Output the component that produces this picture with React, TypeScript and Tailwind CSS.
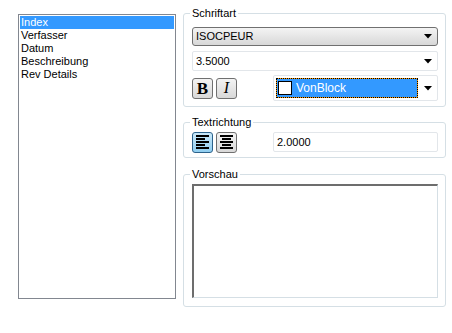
// App.tsx — text style dialog (Schriftart / Textrichtung / Vorschau)

const items = ["Index", "Verfasser", "Datum", "Beschreibung", "Rev Details"];

function Arrow() {
  return (
    <svg width="8" height="5" viewBox="0 0 8 5" className="block">
      <polygon points="0,0 8,0 4,4.5" fill="#000" />
    </svg>
  );
}

function AlignIcon({ centered }: { centered?: boolean }) {
  // 5 bars, alternating long/short
  const widths = [13, 9, 13, 9, 13];
  return (
    <svg width="13" height="14" viewBox="0 0 13 14" className="block">
      {widths.map((w, i) => (
        <rect
          key={i}
          x={centered ? (13 - w) / 2 : 0}
          y={i * 3}
          width={w}
          height="2"
          fill="#000"
        />
      ))}
    </svg>
  );
}

function Group({
  label,
  className,
  children,
}: {
  label: string;
  className?: string;
  children: React.ReactNode;
}) {
  return (
    <fieldset
      className={`border border-[#d5dfe5] rounded-[3px] pl-[8px] pr-[7px] ${className ?? ""}`}
    >
      <legend className="-ml-[2px] px-[2px] leading-[13px]">{label}</legend>
      {children}
    </fieldset>
  );
}

export default function App() {
  return (
    <div className="w-[452px] h-[333px] bg-white flex font-['Liberation_Sans',sans-serif] text-[11px] leading-[13px] text-black">
      {/* Property list */}
      <div className="ml-[18px] mt-[14px] w-[158px] h-[285px] border border-[#828790] p-[1px]">
        {items.map((item, i) => (
          <div
            key={item}
            className={
              i === 0
                ? "h-[13px] px-[1px] bg-[#3399ff] text-white"
                : "h-[13px] px-[1px]"
            }
          >
            {item}
          </div>
        ))}
      </div>

      {/* Right column */}
      <div className="ml-[7px] w-[263px] flex flex-col">
        {/* Schriftart */}
        <Group label="Schriftart" className="mt-[7px] pt-[7px] pb-[5px]">
          <div className="h-[19px] border border-[#707070] rounded-[3px] bg-gradient-to-b from-[#f4f4f4] to-[#d8d8d8] flex items-center pl-[3px] pr-[5px]">
            <span className="flex-1">ISOCPEUR</span>
            <Arrow />
          </div>
          <div className="mt-[5px] h-[20px] border border-[#e2e6ea] rounded-[2px] flex items-center pl-[3px] pr-[5px]">
            <span className="flex-1">3.5000</span>
            <Arrow />
          </div>
          <div className="mt-[4px] h-[26px] flex items-center">
            <div className="w-[21px] h-[21px] border border-[#707070] rounded-[3px] bg-gradient-to-b from-[#f4f4f4] to-[#d8d8d8] flex items-center justify-center font-['Liberation_Serif',serif] font-bold text-[17px] leading-none">
              B
            </div>
            <div className="ml-[3px] w-[21px] h-[21px] border border-[#707070] rounded-[3px] bg-gradient-to-b from-[#f4f4f4] to-[#d8d8d8] flex items-center justify-center font-['Liberation_Serif',serif] italic text-[16px] leading-none">
              I
            </div>
            <div className="ml-auto w-[165px] h-[26px] border border-[#e2e6ea] rounded-[2px] p-[2px] flex items-center">
              <div className="w-[142px] h-[20px] bg-[#ff9900]">
                <div className="h-full border border-dotted border-black bg-[#3399ff] bg-clip-padding flex items-center pl-[1px] text-white text-[12px]">
                  <span className="w-[14px] h-[14px] border border-black bg-white" />
                  <span className="ml-[4px]">VonBlock</span>
                </div>
              </div>
              <div className="flex-1 flex justify-center pl-[2px]">
                <Arrow />
              </div>
            </div>
          </div>
        </Group>

        {/* Textrichtung */}
        <Group label="Textrichtung" className="mt-[9px] pt-[3px] pb-[5px]">
          <div className="h-[20px] flex items-center">
            <div className="w-[21px] h-[21px] border border-[#2c628b] rounded-[3px] bg-gradient-to-b from-[#c9e8f9] to-[#8fcdf0] flex items-center justify-center">
              <AlignIcon />
            </div>
            <div className="ml-[3px] w-[21px] h-[21px] border border-[#707070] rounded-[3px] bg-gradient-to-b from-[#f4f4f4] to-[#d8d8d8] flex items-center justify-center">
              <AlignIcon centered />
            </div>
            <div className="ml-auto w-[165px] h-[20px] border border-[#e2e6ea] rounded-[2px] flex items-center pl-[3px]">
              2.0000
            </div>
          </div>
        </Group>

        {/* Vorschau */}
        <Group label="Vorschau" className="mt-[10px] pt-[3px] pb-[8px]">
          <div className="h-[114px] border-t-2 border-l-2 border-r border-b border-t-[#6d6d6d] border-l-[#6d6d6d] border-r-[#d5dfe5] border-b-[#d5dfe5] bg-white" />
        </Group>
      </div>
    </div>
  );
}
